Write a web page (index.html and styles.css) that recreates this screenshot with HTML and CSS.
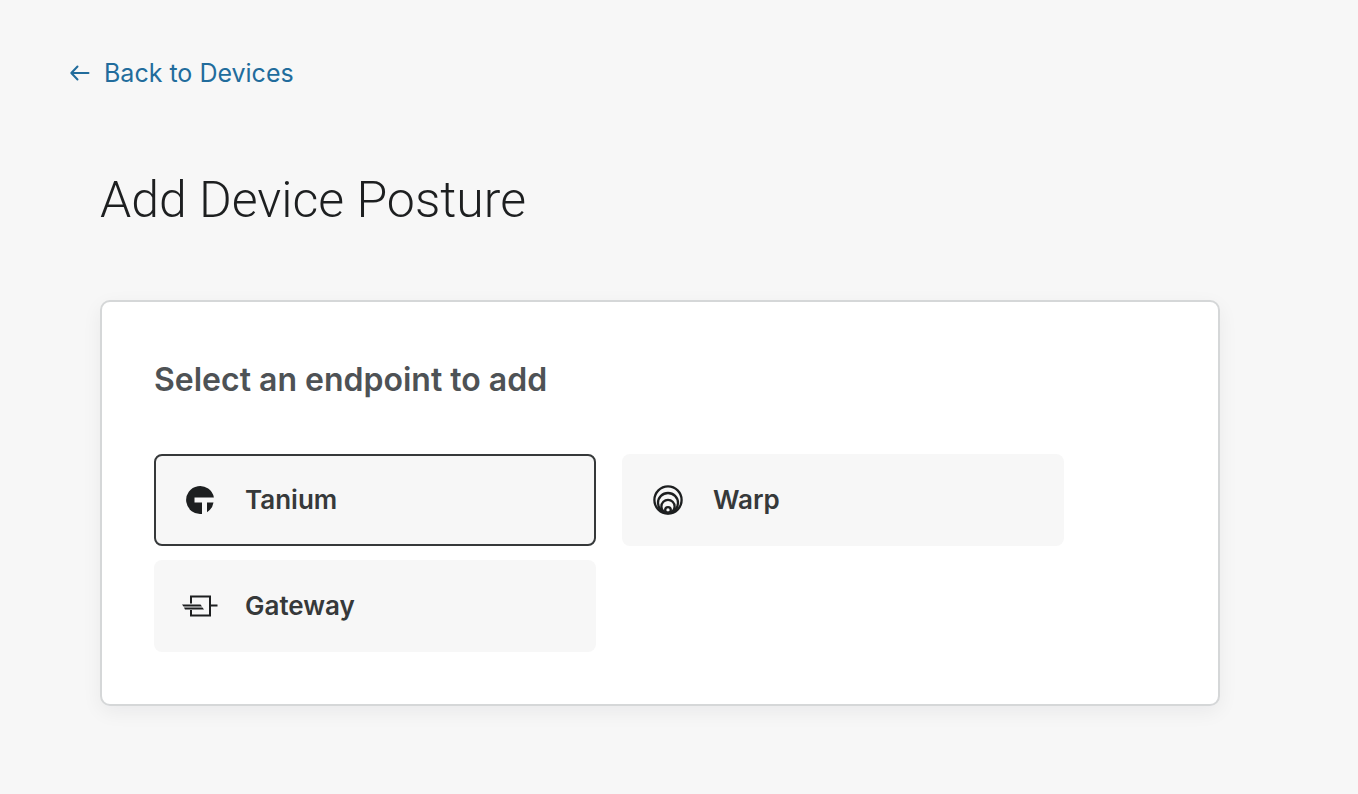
FILE: index.html
```html
<!DOCTYPE html>
<html lang="en">
<head>
  <meta charset="utf-8">
  <meta name="viewport" content="width=device-width, initial-scale=1">
  <title>Add Device Posture</title>
  <link rel="stylesheet" href="styles.css">
</head>
<body>
  <a class="back" href="#devices">
    <svg class="back-icon" viewBox="0 0 22 18" aria-hidden="true"><path d="M20.500 9H3.500M9.500 2.500 3.300 9l6.200 6.500"/></svg>
    <span>Back to Devices</span>
  </a>
  <main class="content">
    <h1 class="title">Add Device Posture</h1>
    <section class="card" aria-labelledby="card-title">
      <h2 class="card-title" id="card-title">Select an endpoint to add</h2>
      <div class="options">
        <button class="option option-selected" type="button" aria-pressed="true">
          <svg class="option-icon" viewBox="0 0 36 36" aria-hidden="true">
            <path fill="currentColor" d="M31.900 15.500A14 14 0 1 0 20 31.900V20.500H12.500V15.500ZM25 20.500H31.500A14 14 0 0 1 25 30.200Z"/>
          </svg>
          <span>Tanium</span>
        </button>
        <button class="option" type="button" aria-pressed="false">
          <svg class="option-icon" viewBox="0 0 36 36" aria-hidden="true">
            <g fill="none" stroke="currentColor" stroke-width="2.300">
              <circle cx="18" cy="18" r="13.600"/>
              <circle cx="18" cy="21" r="10"/>
              <circle cx="18" cy="24.400" r="6.600"/>
              <circle cx="18" cy="28" r="2.800"/>
            </g>
          </svg>
          <span>Warp</span>
        </button>
        <button class="option" type="button" aria-pressed="false">
          <svg class="option-icon" viewBox="0 0 36 36" aria-hidden="true">
            <g fill="none" stroke="currentColor" stroke-width="2">
              <path d="M9 15.500V8.500H28V27.500H9V22M28 17.500H35.500"/>
            </g>
            <path fill="currentColor" d="M0 16.500H18.500L20 18.500H1.500ZM2 19.500H20.500L22 21.500H3Z"/>
          </svg>
          <span>Gateway</span>
        </button>
      </div>
    </section>
  </main>
</body>
</html>
```
FILE: styles.css
```css
* {
  box-sizing: border-box;
}

body {
  margin: 0;
  padding: 56px 68px;
  background: #f7f7f7;
  color: #1d1f20;
  font-family: Inter, "Liberation Sans", sans-serif;
}

.back {
  display: inline-flex;
  align-items: center;
  gap: 14px;
  color: #216c9c;
  font-size: 25px;
  line-height: 34px;
  text-decoration: none;
}

.back-icon {
  width: 22px;
  height: 18px;
  fill: none;
  stroke: currentColor;
  stroke-width: 2;
  stroke-linecap: round;
  stroke-linejoin: round;
}

.content {
  max-width: 1152px;
  padding-left: 32px;
}

.title {
  margin: 78px 0 68px;
  font-family: Roboto, Inter, sans-serif;
  font-size: 50px;
  font-weight: 300;
  line-height: 64px;
}

.card {
  padding: 58px 52px 52px;
  border: 2px solid #d5d7d8;
  border-radius: 10px;
  background: #fff;
  box-shadow: 0 6px 20px rgba(0, 20, 40, 0.06);
}

.card-title {
  margin: 0 0 54px;
  color: #4e5255;
  font-size: 32px;
  font-weight: 600;
  line-height: 40px;
}

.options {
  display: grid;
  grid-template-columns: repeat(auto-fit, minmax(300px, 442px));
  gap: 14px 26px;
}

.option {
  display: flex;
  align-items: center;
  gap: 27px;
  min-height: 92px;
  padding: 0 26px;
  border: 2px solid transparent;
  border-radius: 8px;
  background: #f7f7f7;
  color: #36393a;
  font: 600 26px/32px Inter, "Liberation Sans", sans-serif;
  text-align: left;
  cursor: pointer;
}

.option-selected {
  border-color: #36393a;
}

.option-icon {
  flex: none;
  width: 36px;
  height: 36px;
  color: #1d1f20;
}
```
